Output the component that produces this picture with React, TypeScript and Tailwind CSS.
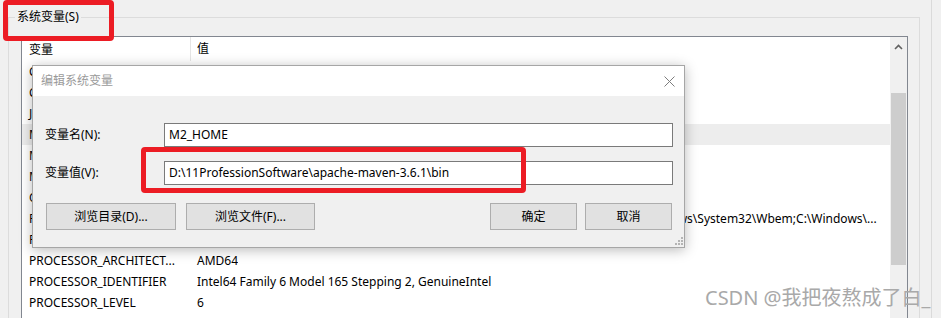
import React from 'react';

const rows: { name: string; value: string }[] = [
  { name: 'ComSpec', value: 'C:\\Windows\\system32\\cmd.exe' },
  { name: 'CLASSPATH', value: '.;%JAVA_HOME%\\lib' },
  { name: 'JAVA_HOME', value: 'D:\\Java\\jdk1.8.0_281' },
  { name: 'M2_HOME', value: 'D:\\11ProfessionSoftware\\apache-maven-3.6.1\\bin' },
  { name: 'MAVEN_HOME', value: 'D:\\11ProfessionSoftware\\apache-maven-3.6.1' },
  { name: 'MYSQL_HOME', value: 'D:\\mysql-8.0.22' },
  { name: 'OS', value: 'Windows_NT' },
  {
    name: 'Path',
    value:
      'C:\\Program Files\\Common Files\\Oracle\\Java\\javapath;C:\\Windows\\system32;C:\\Windows\\System32\\Wbem;C:\\Windows\\...',
  },
  { name: 'PATHEXT', value: '.COM;.EXE;.BAT;.CMD;.VBS;.VBE;.JS' },
  { name: 'PROCESSOR_ARCHITECT...', value: 'AMD64' },
  { name: 'PROCESSOR_IDENTIFIER', value: 'Intel64 Family 6 Model 165 Stepping 2, GenuineIntel' },
  { name: 'PROCESSOR_LEVEL', value: '6' },
  { name: 'PROCESSOR_REVISION', value: 'a502' },
];

function Button({ label, w }: { label: string; w: string }) {
  return (
    <button className={`${w} h-[27px] border border-[#adadad] bg-[#e1e1e1] text-[12px] text-black`}>
      {label}
    </button>
  );
}

function Field({ label, value, mt }: { label: string; value: string; mt: string }) {
  return (
    <div className={`flex items-center ${mt}`}>
      <span className="w-[119px] shrink-0">{label}</span>
      <div className="flex h-[24px] flex-1 items-center border border-[#7a7a7a] bg-white pl-[4px]">{value}</div>
    </div>
  );
}

export default function App() {
  return (
    <div className="relative h-[318px] w-[941px] overflow-hidden bg-[#f0f0f0] font-['Noto_Sans','Noto_Sans_CJK_SC',sans-serif] text-[12px] text-black">
      <div className="h-full w-[932px] border-r border-[#dadada] pl-[8px] pt-[10px]">
        <fieldset className="h-[400px] w-[912px] border border-[#dcdcdc]">
          <legend className="ml-[6px] px-[2px] leading-[14px]">系统变量(S)</legend>

          {/* list view */}
          <div className="ml-[12px] mt-[12px] flex h-[360px] w-[887px] border border-[#828790] bg-white">
            <div className="min-w-0 flex-1 overflow-hidden">
              <div className="flex h-[24px] items-center">
                <div className="h-full w-[169px] border-r border-[#e5e5e5] pl-[7px] leading-[25px]">变量</div>
                <div className="pl-[6px]">值</div>
              </div>
              {rows.map((r) => (
                <div
                  key={r.name}
                  className={`flex h-[21px] items-center whitespace-nowrap ${r.name === 'M2_HOME' ? 'bg-[#ededed]' : ''}`}
                >
                  <div className="w-[169px] shrink-0 overflow-hidden pl-[7px]">{r.name}</div>
                  <div className="min-w-0 overflow-hidden pl-[6px]">{r.value}</div>
                </div>
              ))}
            </div>
            <div className="flex w-[17px] shrink-0 flex-col bg-[#f0f0f0]">
              <div className="flex h-[17px] items-center justify-center pt-[2px]">
                <svg width="9" height="6" viewBox="0 0 9 6">
                  <path d="M1 5 L4.5 1.5 L8 5" fill="none" stroke="#606060" strokeWidth="1.6" />
                </svg>
              </div>
              <div className="h-[39px]" />
              <div className="mx-[1px] h-[172px] bg-[#cdcdcd]" />
            </div>
          </div>
        </fieldset>
      </div>

      {/* edit dialog */}
      <div className="absolute left-[32px] top-[65px] flex h-[183px] w-[653px] flex-col border border-[#a6a6a6] bg-[#f0f0f0] shadow-[0_2px_12px_rgba(0,0,0,0.28)]">
        <div className="flex h-[30px] items-center justify-between bg-white pl-[8px] pr-[9px]">
          <span className="text-[#9a9a9a]">编辑系统变量</span>
          <svg width="11" height="11" viewBox="0 0 11 11">
            <path d="M0.5 0.5 L10.5 10.5 M10.5 0.5 L0.5 10.5" stroke="#7d7d7d" strokeWidth="1" />
          </svg>
        </div>
        <div className="relative flex-1 pl-[12px] pr-[11px] pt-[27px]">
          <Field label="变量名(N):" value="M2_HOME" mt="" />
          <Field label="变量值(V):" value="D:\11ProfessionSoftware\apache-maven-3.6.1\bin" mt="mt-[14px]" />
          <div className="mt-[18px] flex pl-[1px] pr-[1px]">
            <Button label="浏览目录(D)..." w="w-[130px]" />
            <div className="w-[10px]" />
            <Button label="浏览文件(F)..." w="w-[129px]" />
            <div className="flex-1" />
            <Button label="确定" w="w-[87px]" />
            <div className="w-[8px]" />
            <Button label="取消" w="w-[87px]" />
          </div>
          <svg className="absolute bottom-[2px] right-[1px]" width="8" height="8" viewBox="0 0 8 8">
            <g fill="#b4b4b4">
              <rect x="6" y="0" width="2" height="2" />
              <rect x="3" y="3" width="2" height="2" />
              <rect x="6" y="3" width="2" height="2" />
              <rect x="0" y="6" width="2" height="2" />
              <rect x="3" y="6" width="2" height="2" />
              <rect x="6" y="6" width="2" height="2" />
            </g>
          </svg>
        </div>
      </div>

      {/* annotation boxes */}
      <div className="absolute left-[3px] top-0 h-[41px] w-[111px] rounded-[4px] border-[5px] border-[#ec1c24]" />
      <div className="absolute left-[141px] top-[147px] h-[46px] w-[385px] rounded-[4px] border-[5px] border-[#ec1c24]" />

      {/* watermark */}
      <div className="absolute left-[705px] top-[284px] text-[20px] leading-[28px] text-[#a9a9a9]">CSDN @我把夜熬成了白_</div>
    </div>
  );
}
